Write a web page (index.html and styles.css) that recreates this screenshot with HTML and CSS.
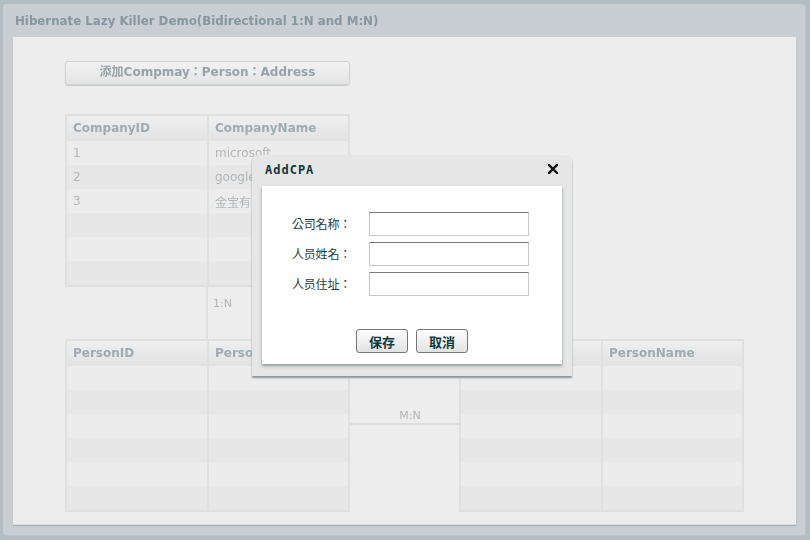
FILE: index.html
```html
<!DOCTYPE html>
<html>
<head>
<meta charset="utf-8">
<link rel="stylesheet" href="styles.css">
</head>
<body>
<div class="stage">
  <div class="window">
    <div class="titlebar">Hibernate Lazy Killer Demo(Bidirectional 1:N and M:N)</div>
    <div class="content">
      <button class="add-btn">添加Compmay：Person：Address</button>
      <table class="grid company">
        <thead><tr><th>CompanyID</th><th>CompanyName</th></tr></thead>
        <tbody>
          <tr><td>1</td><td>microsoft</td></tr>
          <tr class="alt"><td>2</td><td>google</td></tr>
          <tr><td>3</td><td>金宝有限公司</td></tr>
          <tr class="alt"><td></td><td></td></tr>
          <tr><td></td><td></td></tr>
          <tr class="alt"><td></td><td></td></tr>
        </tbody>
      </table>
      <div class="link-v"><span class="rel">1:N</span></div>
      <div class="bottom">
        <table class="grid person">
          <thead><tr><th>PersonID</th><th>PersonName</th></tr></thead>
          <tbody>
            <tr><td></td><td></td></tr>
            <tr class="alt"><td></td><td></td></tr>
            <tr><td></td><td></td></tr>
            <tr class="alt"><td></td><td></td></tr>
            <tr><td></td><td></td></tr>
            <tr class="alt"><td></td><td></td></tr>
          </tbody>
        </table>
        <div class="link-h"><span class="rel">M:N</span><div class="hline"></div></div>
        <table class="grid person">
          <thead><tr><th>AddressID</th><th>PersonName</th></tr></thead>
          <tbody>
            <tr><td></td><td></td></tr>
            <tr class="alt"><td></td><td></td></tr>
            <tr><td></td><td></td></tr>
            <tr class="alt"><td></td><td></td></tr>
            <tr><td></td><td></td></tr>
            <tr class="alt"><td></td><td></td></tr>
          </tbody>
        </table>
      </div>
    </div>
  </div>
</div>

<div class="dialog">
  <div class="dlg-head">
    <span class="dlg-title">AddCPA</span>
    <svg class="dlg-close" width="10" height="10" viewBox="0 0 10 10"><path d="M1 1L9 9M9 1L1 9" stroke="#111" stroke-width="2.4" stroke-linecap="square"/></svg>
  </div>
  <div class="dlg-body">
    <div class="form">
      <label class="lbl">公司名称：</label><input class="field" type="text">
      <label class="lbl">人员姓名：</label><input class="field" type="text">
      <label class="lbl">人员住址：</label><input class="field" type="text">
    </div>
    <div class="actions">
      <button class="dlg-btn">保存</button>
      <button class="dlg-btn">取消</button>
    </div>
  </div>
</div>
</body>
</html>
```
FILE: styles.css
```css
html, body {
  margin: 0;
  padding: 0;
}
body {
  width: 810px;
  height: 540px;
  background: #b3bec4;
  overflow: hidden;
  position: relative;
  font-family: "DejaVu Sans", "Noto Sans CJK TC", sans-serif;
}
.stage {
  padding: 4px 5px 5px 3px;
  filter: blur(0.6px);
}
.window {
  width: 802px;
  height: 531px;
  background: #c8ced1;
  display: flex;
  flex-direction: column;
  border-radius: 3px;
  box-shadow: 1px 1px 0 #bcc5c9;
}
.titlebar {
  height: 33px;
  box-sizing: border-box;
  padding: 1px 0 0 12px;
  line-height: 32px;
  font-size: 11.8px;
  font-weight: bold;
  color: #8797a0;
}
.content {
  margin: 0 9px 0 10px;
  height: 487px;
  background: #ededed;
  box-sizing: border-box;
  padding: 24px 0 0 52px;
  box-shadow: 0 1px 0 #d8dbdc, 0 2px 1px #a9b2b6;
}
.add-btn {
  display: block;
  width: 285px;
  height: 24px;
  border: 1px solid #cfd2d3;
  border-radius: 3px;
  background: linear-gradient(#f2f2f2, #e4e4e4);
  box-shadow: 0 1px 1px #c9cccd;
  font-family: "DejaVu Sans", "Noto Sans CJK TC", sans-serif;
  font-size: 12px;
  line-height: 14px;
  font-weight: bold;
  color: #96a3a8;
  padding: 0 0 3px 0;
}
.grid {
  border-collapse: collapse;
  width: 285px;
  border: 2px solid #dfdfdf;
  background: #ececec;
}
.company {
  margin-top: 29px;
}
.grid th {
  height: 23px;
  text-align: left;
  padding: 0 0 0 6px;
  font-size: 12px;
  font-weight: bold;
  color: #9eacb1;
  background: linear-gradient(#efefef, #e3e3e3);
  border-bottom: 2px solid #e2e2e2;
}
.grid th + th, .grid td + td {
  border-left: 2px solid #e0e0e0;
}
.grid th:first-child, .grid td:first-child {
  width: 134px;
}
.grid td {
  height: 24px;
  padding: 0 0 0 6px;
  font-family: "DejaVu Sans", "Noto Sans CJK TC", sans-serif;
  font-size: 12px;
  color: #b2b6b8;
}
.grid tr.alt td {
  background: #e7e7e7;
}
.link-v {
  margin-left: 141px;
  height: 52px;
  border-left: 2px solid #dfdfdf;
  padding: 5px 0 0 5px;
  box-sizing: border-box;
}
.rel {
  font-size: 11px;
  line-height: 13px;
  color: #b1b4b6;
}
.bottom {
  display: flex;
}
.link-h {
  width: 109px;
  display: flex;
  flex-direction: column;
  align-items: center;
  padding-top: 70px;
  box-sizing: border-box;
}
.link-h .rel {
  margin-left: 11px;
}
.hline {
  margin-top: 1px;
  width: 100%;
  height: 2px;
  background: #dedede;
}

/* dialog overlay */
.dialog {
  position: absolute;
  left: 252px;
  top: 155px;
  width: 320px;
  height: 221px;
  background: #e6e6e6;
  border-radius: 6px 6px 0 0;
  box-shadow: 0 2px 2px #8c9396;
  box-sizing: border-box;
  padding: 0 10px 12px 10px;
  display: flex;
  flex-direction: column;
}
.dlg-head {
  height: 31px;
  display: flex;
  align-items: center;
  justify-content: space-between;
  padding: 0 4px 0 3px;
}
.dlg-title {
  font-family: "DejaVu Sans Mono", monospace;
  font-weight: bold;
  font-size: 12px;
  letter-spacing: 1px;
  color: #12343a;
  margin-top: -2px;
}
.dlg-close {
  margin-top: -3px;
}
.dlg-body {
  flex: 1;
  background: #fff;
  box-shadow: 0 2px 3px #8f9597;
  display: flex;
  flex-direction: column;
  align-items: center;
  padding-top: 26px;
  box-sizing: border-box;
}
.form {
  display: grid;
  grid-template-columns: 77px 160px;
  row-gap: 6px;
  margin-left: 30px;
  align-self: flex-start;
}
.lbl {
  font-family: "Noto Sans CJK TC", sans-serif;
  font-size: 12px;
  color: #1f3a3f;
  line-height: 24px;
  letter-spacing: -0.2px;
}
.field {
  width: 160px;
  height: 24px;
  box-sizing: border-box;
  border: 1px solid #c8c8c8;
  border-top-color: #7a7a7a;
  margin: 0;
  padding: 0;
  background: #fff;
}
.actions {
  margin-top: 33px;
  display: flex;
  gap: 8px;
}
.dlg-btn {
  width: 52px;
  height: 24px;
  border: 1px solid #777;
  border-radius: 3px;
  background: linear-gradient(#fdfdfd, #e2e2e2);
  font-family: "Noto Sans CJK SC", sans-serif;
  font-weight: bold;
  font-size: 13px;
  color: #0f3a40;
  padding: 0;
}
```
